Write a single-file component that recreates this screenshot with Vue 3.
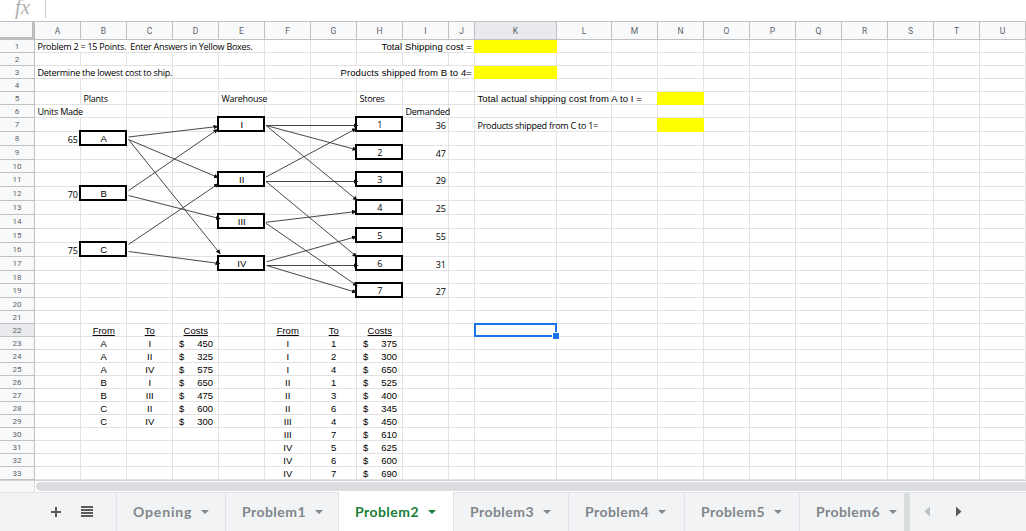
<script setup>
const letters = 'ABCDEFGHIJKLMNOPQRSTU'.split('')
const tall = new Set([7, 8, 9, 11, 12, 13, 14, 15, 16, 17, 19])
const rowNumbers = Array.from({ length: 33 }, (_, i) => i + 1)
const rowHeights = rowNumbers.map((n) => (tall.has(n) ? '14px' : '13px')).join(' ')

// ref: [text, class names, number of columns spanned]
const content = {
  A1: ['Problem 2 = 15 Points.\u00a0 Enter Answers in Yellow Boxes.', 'cal title', 5],
  H1: ['Total Shipping cost =', 'right', 3],
  K1: ['', 'yellow'],
  A3: ['Determine the lowest cost to ship.', 'cal lowest', 3],
  G3: ['Products shipped from B to 4=', 'right', 4],
  K3: ['', 'yellow'],
  B5: ['Plants', 'cal'],
  E5: ['Warehouse', 'cal', 2],
  H5: ['Stores', 'cal'],
  K5: ['Total actual shipping cost from A to I =', 'actual', 3],
  N5: ['', 'yellow'],
  A6: ['Units Made', 'cal', 2],
  I6: ['Demanded', 'cal'],
  K7: ['Products shipped from C to 1=', 'cal', 2],
  N7: ['', 'yellow'],
  A8: ['65', 'cal num'],
  A12: ['70', 'cal num'],
  A16: ['75', 'cal num'],
  B8: ['A', 'box'],
  B12: ['B', 'box'],
  B16: ['C', 'box'],
  E7: ['I', 'box'],
  E11: ['II', 'box'],
  E14: ['III', 'box'],
  E17: ['IV', 'box'],
  K22: ['', 'selected'],
}
const demand = [36, 47, 29, 25, 55, 31, 27]
demand.forEach((d, i) => {
  const row = 7 + i * 2
  content['H' + row] = [String(i + 1), 'box cal']
  content['I' + row] = [String(d), 'cal num']
})
function costTable(cols, rows) {
  ;['From', 'To', 'Costs'].forEach((t, i) => {
    content[cols[i] + 22] = [t, 'center under']
  })
  rows.forEach(([from, to, cost], i) => {
    content[cols[0] + (23 + i)] = [from, 'center']
    content[cols[1] + (23 + i)] = [to, 'center']
    content[cols[2] + (23 + i)] = [String(cost), 'money']
  })
}
costTable(['B', 'C', 'D'], [
  ['A', 'I', 450], ['A', 'II', 325], ['A', 'IV', 575], ['B', 'I', 650],
  ['B', 'III', 475], ['C', 'II', 600], ['C', 'IV', 300],
])
costTable(['F', 'G', 'H'], [
  ['I', '1', 375], ['I', '2', 300], ['I', '4', 650], ['II', '1', 525], ['II', '3', 400],
  ['II', '6', 345], ['III', '4', 450], ['III', '7', 610], ['IV', '5', 625], ['IV', '6', 600],
  ['IV', '7', 690],
])

const rows = rowNumbers.map((n) => {
  const cells = []
  for (let c = 0; c < letters.length;) {
    const [text = '', cls = '', span = 1] = content[letters[c] + n] || []
    cells.push({ key: letters[c] + n, text, cls: [cls, 's' + span] })
    c += span
  }
  return { n, cells }
})

const arrows = [
  [128.5, 137, 217.5, 126.5], [128.5, 139.5, 218, 177.5], [128.5, 139.5, 220, 253.5],
  [128.5, 190.7, 217.5, 129.5], [128.5, 195.5, 220, 218.7], [128.5, 244.5, 218, 184],
  [128.5, 251.5, 219.5, 263.5], [266, 125.5, 357.5, 125.5], [266, 125.5, 356.5, 149.7],
  [266, 125.5, 357, 200], [266, 177, 356, 128.7], [266, 181.5, 357.5, 181.5],
  [266, 181.5, 356.5, 256.5], [266, 222.3, 356, 211.5], [266, 223.3, 357, 285.7],
  [266.7, 261.7, 356, 236.7], [266.7, 265.5, 357.5, 265.5], [266.7, 265.5, 356, 292.3],
]
const tabs = [
  ['Opening', 't109 first'], ['Problem1', 't113'], ['Problem2', 't115 active'], ['Problem3', 't115'],
  ['Problem4', 't116'], ['Problem5', 't115'], ['Problem6', 't105'],
]
</script>

<template>
  <div class="app">
    <div class="formula">
      <span class="fx">fx</span>
      <span class="bar"></span>
    </div>
    <div class="sheet">
      <div class="corner"></div>
      <div v-for="l in letters" :key="l" class="head" :class="{ hot: l === 'K' }">{{ l }}</div>
      <template v-for="r in rows" :key="r.n">
        <div class="side" :class="{ hot: r.n === 22 }">{{ r.n }}</div>
        <div v-for="c in r.cells" :key="c.key" class="cell" :class="c.cls">
          <span v-if="c.cls[0] === 'money'" class="cur">$</span>
          <span v-if="c.text" class="txt">{{ c.text }}</span>
        </div>
      </template>
    </div>
    <svg class="arrows" width="460" height="320" viewBox="0 0 460 320">
      <defs>
        <marker id="tip" markerUnits="userSpaceOnUse" markerWidth="6" markerHeight="5" refX="4" refY="2.2" orient="auto">
          <path d="M0 0L5 2.2L0 4.4Z" fill="#111" />
        </marker>
      </defs>
      <line v-for="(a, i) in arrows" :key="i" :x1="a[0]" :y1="a[1]" :x2="a[2]" :y2="a[3]" stroke="#333" stroke-width="0.9" marker-end="url(#tip)" />
    </svg>
    <div class="scroll"><div class="gutter"></div><div class="thumb"></div></div>
    <div class="footer">
      <div class="tools">
        <svg width="10" height="10" viewBox="0 0 10 10"><path d="M4 0h2v4h4v2H6v4H4V6H0V4h4z" fill="#5b5b5b" /></svg>
        <svg width="12" height="11" viewBox="0 0 12 11"><path d="M0 0h12v2H0zM0 3h12v2H0zM0 6h12v2H0zM0 9h12v2H0z" fill="#5b5b5b" /></svg>
      </div>
      <div v-for="t in tabs" :key="t[0]" class="tab" :class="t[1]">
        <span class="name">{{ t[0] }}</span>
        <svg width="8" height="4" viewBox="0 0 8 4"><path d="M0 0h8L4 4z" fill="currentColor" /></svg>
      </div>
      <div class="edge"></div>
      <svg class="nav" width="40" height="11" viewBox="0 0 40 11">
        <path d="M6 0.5v10L0.5 5.5z" fill="#bdc0c3" />
        <path d="M32 0.5v10L37.5 5.5z" fill="#5b5b5b" />
      </svg>
    </div>
  </div>
</template>

<style>
body { margin: 0; background: #fff; overflow: hidden; }
</style>

<style scoped>
.app { position: relative; width: 1026px; height: 531px; overflow: hidden; background: #fff; font-family: "Liberation Sans", Arial, sans-serif; color: #000; }
.formula { height: 21px; display: flex; border-bottom: 1px solid #c0c0c0; box-sizing: content-box; }
.fx { width: 45px; box-sizing: border-box; padding-left: 15px; font: italic 21px/15px "Liberation Serif", serif; color: #b0b0b0; }
.bar { width: 1px; height: 18px; background: #c8c8c8; }
.sheet {
  display: grid;
  grid-template-columns: 35px repeat(9, 46px) 26px 82px 55px repeat(9, 46px);
  grid-template-rows: 18px v-bind(rowHeights);
  width: 1026px; height: 458px;
}
.corner { box-sizing: border-box; background: #f8f9fa; border-right: 3px solid #bdbdbd; border-bottom: 3px solid #bdbdbd; }
.head, .side { box-sizing: border-box; background: #f8f9fa; border-right: 1px solid #c0c0c0; border-bottom: 1px solid #c0c0c0; color: #5f6368; font-family: Roboto, sans-serif; font-size: 8.5px; text-align: center; min-width: 0; min-height: 0; }
.head { line-height: 18px; }
.side { font-size: 8px; line-height: 14px; }
.hot { background: #e8eaed; }
.cell { position: relative; box-sizing: border-box; min-width: 0; min-height: 0; border-right: 1px solid #e2e2e2; border-bottom: 1px solid #e2e2e2; padding: 0 2px 0 2.5px; display: flex; align-items: flex-end; font-size: 9.5px; line-height: 10px; white-space: pre; }
.s2 { grid-column: span 2; }
.s3 { grid-column: span 3; }
.s4 { grid-column: span 4; }
.s5 { grid-column: span 5; }
.cal { font-family: "Open Sans", "Noto Sans", sans-serif; font-size: 9px; letter-spacing: -0.25px; }
.right { justify-content: flex-end; padding-right: 2px; letter-spacing: 0.12px; }
.actual { letter-spacing: 0.12px; }
.num { justify-content: flex-end; padding-right: 2px; letter-spacing: 0; }
.center { justify-content: center; }
.under .txt { text-decoration: underline; }
.money { justify-content: space-between; padding: 0 5px 0 6px; }
.yellow::before { content: ""; position: absolute; inset: 0 -1px -1px -1px; background: #ff0; }
.box { justify-content: center; line-height: 12px; }
.box::before { content: ""; position: absolute; inset: -2px -1px -1px -2px; border: 2px solid #000; background: #fff; }
.box .txt { position: relative; }
.selected::before { content: ""; position: absolute; z-index: 2; inset: -1px -1px -1px -1px; border: 2px solid #1a73e8; }
.selected::after { content: ""; position: absolute; z-index: 3; right: -4px; bottom: -3px; width: 6px; height: 6px; background: #1a73e8; border: 1px solid #fff; margin: 0 0 -1px 0; }
.arrows { position: absolute; left: 0; top: 0; }
.scroll { height: 12px; display: flex; border-top: 1px solid #d0d0d0; box-sizing: border-box; align-items: center; background: #fff; }
.gutter { width: 34px; height: 11px; background: #f8f8f8; border-right: 1px solid #d9d9d9; }
.thumb { flex: 1; height: 9px; margin-left: 1px; background: #dadce0; border-radius: 5px 0 0 5px; }
.footer { height: 39px; display: flex; background: #f1f3f4; box-sizing: border-box; border-top: 1px solid #e2e4e6; }
.tools { width: 116px; box-sizing: border-box; padding: 0 0 1px 51px; display: flex; align-items: center; gap: 20px; }
.tab { box-sizing: border-box; display: flex; align-items: center; gap: 9px; padding: 0 0 1px 16px; border-left: 1px solid #e1e3e6; color: #80868b; font: bold 14px/16px Lato, sans-serif; }
.name { letter-spacing: 0.45px; }
.first .name { letter-spacing: 0.85px; }
.t109 { width: 109px; }
.t113 { width: 113px; }
.t115 { width: 115px; }
.t116 { width: 116px; }
.t105 { width: 105px; }
.active { background: #fff; color: #188038; margin-top: -1px; padding-bottom: 0; }
.edge { width: 6px; background: #d9dcdd; }
.nav { margin: 13px 0 0 14px; }
</style>
